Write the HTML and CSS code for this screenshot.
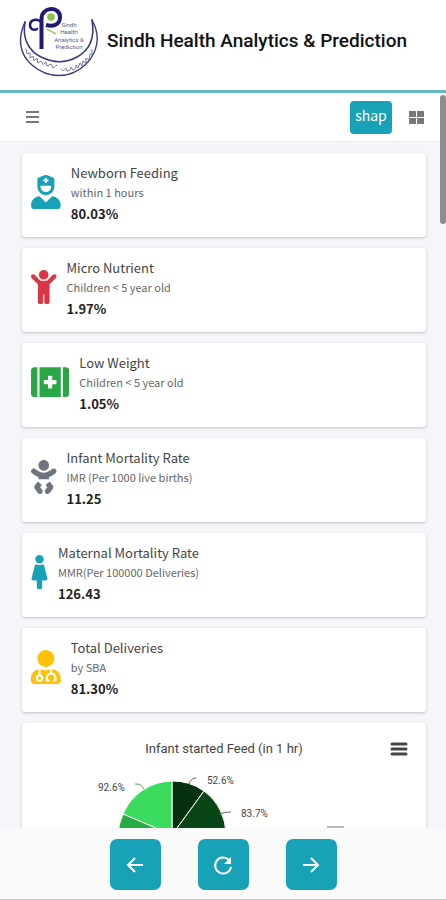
FILE: index.html
```html
<!DOCTYPE html>
<html lang="en">
<head>
<meta charset="utf-8">
<meta name="viewport" content="width=device-width, initial-scale=1">
<title>Sindh Health Analytics &amp; Prediction</title>
<link rel="stylesheet" href="styles.css">
</head>
<body>
<header class="brand">
  <svg class="logo" viewBox="0 0 80 72" role="img" aria-label="Sindh Health logo">
    <g fill="none" stroke="#3b387c" stroke-linecap="round">
      <path d="M6 17C-2 34 1 50 13 60C29 74 51 74 66 60C79 48 82 31 73 15" stroke-width="1.4"/>
      <path d="M6 17C3 34 10 46 22 52C34 58 47 58 58 52C71 45 76 32 73 15" stroke-width="1.6"/>
      <path d="M22.500 44V14C22.500 1 41 1 41 12C41 20 34 22 27 20" stroke="#211a75" stroke-width="4" stroke-linecap="butt"/>
      <path d="M21 16C15 13 11 16 11 20C11 24 15 26 18 24" stroke="#211a75" stroke-width="2.500"/>
      <path d="M7 44l1 5 3-1 0 5 3-2 1 5 3-3 1 5 3-2c2 1 0 4 3 3l2-2 1 4 4-2 2 4c2 0 2-3 4-3M42 64c1 3 4 1 5-1l1 3c3 0 4-2 4-4l2 3c3-1 3-3 3-5l2 3 2-5 2 3 1-5 3 2 0-5 3 2 1-6 2 1 0-5" stroke-width="1" stroke="#77759c"/>
    </g>
    <circle cx="32" cy="12" r="3.800" fill="#8cc34b"/>
    <path d="M28 24l9 5" stroke="#a2cf61" stroke-width="1.500"/>
    <g class="logo-text" text-anchor="middle">
      <text x="50" y="22">Sindh</text>
      <text x="50" y="29">Health</text>
      <text x="50" y="37">Analytics &amp;</text>
      <text x="50" y="44">Prediction</text>
    </g>
  </svg>
  <h1>Sindh Health Analytics &amp; Prediction</h1>
</header>

<div class="view">
  <nav class="toolbar">
    <button class="plain" aria-label="Menu">
      <svg width="14" height="14" viewBox="0 0 14 14" fill="#777"><path d="M1 1h13v2H1zM1 6h13v2H1zM1 11h13v2H1z"/></svg>
    </button>
    <div class="tools">
      <button class="shap">shap</button>
      <button class="plain" aria-label="Dashboard grid">
        <svg width="16" height="14" viewBox="0 0 16 14" fill="#777"><path d="M1 1h7v6H1zM9 1h7v6H9zM1 8h7v6H1zM9 8h7v6H9z"/></svg>
      </button>
    </div>
  </nav>

  <main class="content">
    <article class="card">
      <svg class="icon teal" viewBox="0 0 448 512"><path d="M319.41,320,224,415.39,128.59,320C57.1,323.1,0,381.6,0,453.79A58.21,58.21,0,0,0,58.21,512H389.79A58.21,58.21,0,0,0,448,453.79C448,381.6,390.9,323.1,319.41,320ZM224,304A128,128,0,0,0,352,176V65.82a32,32,0,0,0-20.76-30L246.47,4.07a64,64,0,0,0-44.94,0L116.76,35.86A32,32,0,0,0,96,65.82V176A128,128,0,0,0,224,304ZM184,71.67a5,5,0,0,1,5-5h21.67V45a5,5,0,0,1,5-5h16.66a5,5,0,0,1,5,5V66.67H259a5,5,0,0,1,5,5V88.33a5,5,0,0,1-5,5H237.33V115a5,5,0,0,1-5,5H215.67a5,5,0,0,1-5-5V93.33H189a5,5,0,0,1-5-5ZM144,160H304v16a80,80,0,0,1-160,0Z"/></svg>
      <div><h2>Newborn Feeding</h2><p>within 1 hours</p><strong>80.03%</strong></div>
    </article>
    <article class="card">
      <svg class="icon red" viewBox="0 0 384 512"><path d="M120 72c0-39.765 32.235-72 72-72s72 32.235 72 72c0 39.764-32.235 72-72 72s-72-32.236-72-72zm254.627 1.373c-12.496-12.497-32.758-12.497-45.254 0L242.745 160H141.254L54.627 73.373c-12.496-12.497-32.758-12.497-45.254 0-12.497 12.497-12.497 32.758 0 45.255L104 213.254V480c0 17.673 14.327 32 32 32h16c17.673 0 32-14.327 32-32V368h16v112c0 17.673 14.327 32 32 32h16c17.673 0 32-14.327 32-32V213.254l94.627-94.627c12.497-12.496 12.497-32.757 0-45.254z"/></svg>
      <div><h2>Micro Nutrient</h2><p>Children &lt; 5 year old</p><strong>1.97%</strong></div>
    </article>
    <article class="card">
      <svg class="icon green" viewBox="0 0 576 512"><path d="M0 80v352c0 26.5 21.5 48 48 48h48V32H48C21.5 32 0 53.5 0 80zm128 400h320V32H128v448zm64-248c0-4.400 3.600-8 8-8h56v-56c0-4.400 3.600-8 8-8h48c4.400 0 8 3.600 8 8v56h56c4.400 0 8 3.600 8 8v48c0 4.400-3.600 8-8 8h-56v56c0 4.400-3.600 8-8 8h-48c-4.400 0-8-3.600-8-8v-56h-56c-4.400 0-8-3.600-8-8v-48zM528 32h-48v448h48c26.500 0 48-21.500 48-48V80c0-26.500-21.500-48-48-48z"/></svg>
      <div><h2>Low Weight</h2><p>Children &lt; 5 year old</p><strong>1.05%</strong></div>
    </article>
    <article class="card">
      <svg class="icon gray" viewBox="0 0 384 512"><path d="M192 160c44.200 0 80-35.800 80-80S236.200 0 192 0s-80 35.800-80 80 35.800 80 80 80zm-53.400 248.800l25.600-32-61.500-51.200L56.800 383c-11.400 14.200-11.700 34.400-.8 49l48 64c7.900 10.500 19.900 16 32 16 8.300 0 16.800-2.600 24-8 17.700-13.200 21.200-38.300 8-56l-29.400-39.200zm142.700-83.200l-61.500 51.200 25.600 32L216 448c-13.200 17.700-9.700 42.800 8 56 7.200 5.400 15.600 8 24 8 12.200 0 24.200-5.500 32-16l48-64c10.900-14.600 10.600-34.800-.8-49l-45.900-57.400zM376.700 145c-12.700-18.100-37.600-22.400-55.700-9.800l-40.600 28.500c-52.700 37-124.200 37-176.800 0L63 135.300C44.900 122.600 20 127 7.300 145-5.400 163.100-1 188 17 200.700l40.600 28.500c17 11.900 35.400 20.900 54.400 27.900V288h160v-30.800c19-7 37.400-16 54.400-27.900l40.600-28.500c18.100-12.800 22.400-37.700 9.700-55.800z"/></svg>
      <div><h2>Infant Mortality Rate</h2><p>IMR (Per 1000 live births)</p><strong>11.25</strong></div>
    </article>
    <article class="card">
      <svg class="icon teal" viewBox="0 0 256 512"><path d="M128 0c35.346 0 64 28.654 64 64s-28.654 64-64 64c-35.346 0-64-28.654-64-64S92.654 0 128 0m119.283 354.179l-48-192A24 24 0 0 0 176 144h-11.360c-22.711 10.443-49.590 10.894-73.280 0H80a24 24 0 0 0-23.283 18.179l-48 192C4.935 369.305 16.383 384 32 384h56v104c0 13.255 10.745 24 24 24h32c13.255 0 24-10.745 24-24V384h56c15.591 0 27.071-14.671 23.283-29.821z"/></svg>
      <div><h2>Maternal Mortality Rate</h2><p>MMR(Per 100000 Deliveries)</p><strong>126.43</strong></div>
    </article>
    <article class="card">
      <svg class="icon amber" viewBox="0 0 448 512"><path d="M224 256c70.700 0 128-57.300 128-128S294.700 0 224 0 96 57.300 96 128s57.300 128 128 128zM104 424c0 13.300 10.700 24 24 24s24-10.700 24-24-10.700-24-24-24-24 10.700-24 24zm216-135.400v49c36.500 7.400 64 39.800 64 78.400v41.700c0 7.600-5.400 14.200-12.900 15.700l-32.200 6.400c-4.300.9-8.500-1.900-9.400-6.300l-3.100-15.700c-.9-4.300 1.900-8.600 6.300-9.400l19.300-3.900V416c0-62.800-96-65.100-96 1.900v26.700l19.300 3.900c4.300.9 7.100 5.100 6.300 9.400l-3.100 15.700c-.9 4.300-5.100 7.100-9.400 6.300l-31.200-4.200c-7.900-1.100-13.800-7.800-13.800-15.900V416c0-38.600 27.500-70.900 64-78.400v-45.200c-2.200.7-4.400 1.100-6.600 1.900-18 6.300-37.300 9.800-57.400 9.800s-39.400-3.500-57.400-9.800c-7.400-2.600-14.900-4.200-22.600-5.200v81.600c23.100 6.900 40 28.100 40 53.400 0 30.900-25.100 56-56 56s-56-25.100-56-56c0-25.300 16.900-46.500 40-53.400v-80.400C48.500 301 0 355.800 0 422.400v44.800C0 491.900 20.100 512 44.800 512h358.400c24.700 0 44.800-20.100 44.800-44.800v-44.800c0-72-56.800-130.300-128-133.800z"/></svg>
      <div><h2>Total Deliveries</h2><p>by SBA</p><strong>81.30%</strong></div>
    </article>

    <article class="chart">
      <div class="chart-head">
        <h3>Infant started Feed (in 1 hr)</h3>
        <button class="plain" aria-label="Chart menu">
          <svg width="18" height="16" viewBox="0 0 18 16" stroke="#444" stroke-width="3" stroke-linecap="round"><path d="M2 3h14M2 8h14M2 13h14"/></svg>
        </button>
      </div>
      <svg class="pie" viewBox="0 0 404 130" role="img" aria-label="Infants fed within one hour, by district">
        <g stroke="#fff" stroke-width="1">
          <path d="M150 72V18A54 54 0 0 1 182 28Z" fill="#04310e"/>
          <path d="M150 72L182 28A54 54 0 0 1 204 72Z" fill="#084715"/>
          <path d="M150 72L101 51A54 54 0 0 1 150 18Z" fill="#3bdb60"/>
          <path d="M150 72H96A54 54 0 0 1 101 51Z" fill="#25ab43"/>
          <path d="M96 72A54 54 0 0 0 204 72Z" fill="#12702a"/>
        </g>
        <g fill="none" stroke-width="1">
          <path d="M113 21c6 0 6 1 9 5" stroke="#3da656"/>
          <path d="M167 21c1-4 4-6 7-6" stroke="#555"/>
          <path d="M197 51c4-1 7-2 12-2" stroke="#4d6f54"/>
        </g>
        <path d="M305 63h17v2h-17z" fill="#bbb"/>
        <g class="pie-label">
          <text x="76" y="28">92.6%</text>
          <text x="185" y="21">52.6%</text>
          <text x="219" y="54">83.7%</text>
        </g>
      </svg>
    </article>
  </main>
  <div class="scroll-thumb"></div>
</div>

<footer class="controls">
  <button aria-label="Back"><svg viewBox="0 0 24 24"><path d="M20 12H5M12 5l-7 7 7 7"/></svg></button>
  <button aria-label="Reload"><svg viewBox="0 0 24 24"><path d="M18 7A8 8 0 1 0 20 14"/><path class="solid" d="M20 4v7h-7z"/></svg></button>
  <button aria-label="Forward"><svg viewBox="0 0 24 24"><path d="M4 12h15M12 5l7 7-7 7"/></svg></button>
</footer>
</body>
</html>
```

FILE: styles.css
```css
* { box-sizing: border-box; }

body {
  margin: 0;
  height: 100vh;
  display: flex;
  flex-direction: column;
  background: #f4f6f9;
  font-family: "Noto Sans CJK JP", "Noto Sans", sans-serif;
  color: #333;
}

h1, h2, h3, p { margin: 0; font-weight: 400; }
button { border: 0; padding: 0; font: inherit; }
svg { display: block; }

.brand {
  flex: none;
  display: flex;
  align-items: center;
  gap: 8px;
  height: 93px;
  padding: 0 19px 8px;
  background: #fff;
  border-bottom: 3px solid #63b8c3;
}
.brand h1 {
  font: 500 19px/24px Roboto, sans-serif;
  color: #111;
  white-space: nowrap;
}
.logo { width: 80px; height: 72px; flex: none; }
.logo-text { font: 6px Roboto, sans-serif; fill: #5b5987; }

.view {
  position: relative;
  flex: 1;
  min-height: 0;
  overflow: hidden;
}

.toolbar {
  display: flex;
  align-items: center;
  justify-content: space-between;
  height: 49px;
  padding: 0 22px 0 25px;
  background: #fff;
  border-bottom: 1px solid #eceef0;
}
.tools { display: flex; align-items: center; gap: 16px; }
.plain { background: none; }
.shap {
  width: 42px;
  height: 33px;
  padding-bottom: 5px;
  border-radius: 4px;
  background: #17a2b8;
  color: #fff;
  font-size: 14px;
  line-height: 20px;
}

.content {
  display: flex;
  flex-direction: column;
  gap: 11px;
  padding: 11px 20px 0 22px;
}
.card, .chart {
  background: #fff;
  border-radius: 3px;
  box-shadow: 0 1px 3px rgba(0, 0, 0, .22);
}
.card {
  display: flex;
  align-items: flex-start;
  gap: 10px;
  height: 84px;
  padding: 10px 9px;
}
.icon { height: 34px; margin-top: 12px; }
.teal { fill: #17a2b8; }
.red { fill: #dc3545; }
.green { fill: #28a745; }
.gray { fill: #6c757d; }
.amber { fill: #ffc107; }
.card h2 { font-size: 13px; line-height: 20px; color: #444; }
.card p { font-size: 11px; line-height: 18px; color: #666; }
.card strong { display: block; font-size: 13px; line-height: 26px; color: #222; }

.chart { padding-top: 16px; }
.chart-head {
  display: grid;
  grid-template-columns: 18px 1fr 18px;
  align-items: center;
  padding: 0 18px;
}
.chart h3 {
  grid-column: 2;
  font: 13px/20px Roboto, sans-serif;
  text-align: center;
  color: #444;
}
.pie { width: 100%; margin-top: 4px; }
.pie-label { font: 10px Roboto, sans-serif; fill: #444; }

.scroll-thumb {
  position: absolute;
  top: 2px;
  right: 0;
  width: 6px;
  height: 129px;
  border-radius: 3px;
  background: #8c8d90;
}

.controls {
  flex: none;
  display: flex;
  justify-content: center;
  align-items: flex-start;
  gap: 37px;
  height: 72px;
  padding-top: 11px;
  background: #fafafa;
  border-bottom: 1px solid #c4c4c4;
}
.controls button {
  display: grid;
  place-items: center;
  width: 51px;
  height: 51px;
  border-radius: 7px;
  background: #17a2b8;
}
.controls svg {
  width: 24px;
  height: 24px;
  fill: none;
  stroke: #fff;
  stroke-width: 2;
}
.controls .solid { fill: #fff; stroke: none; }
```
